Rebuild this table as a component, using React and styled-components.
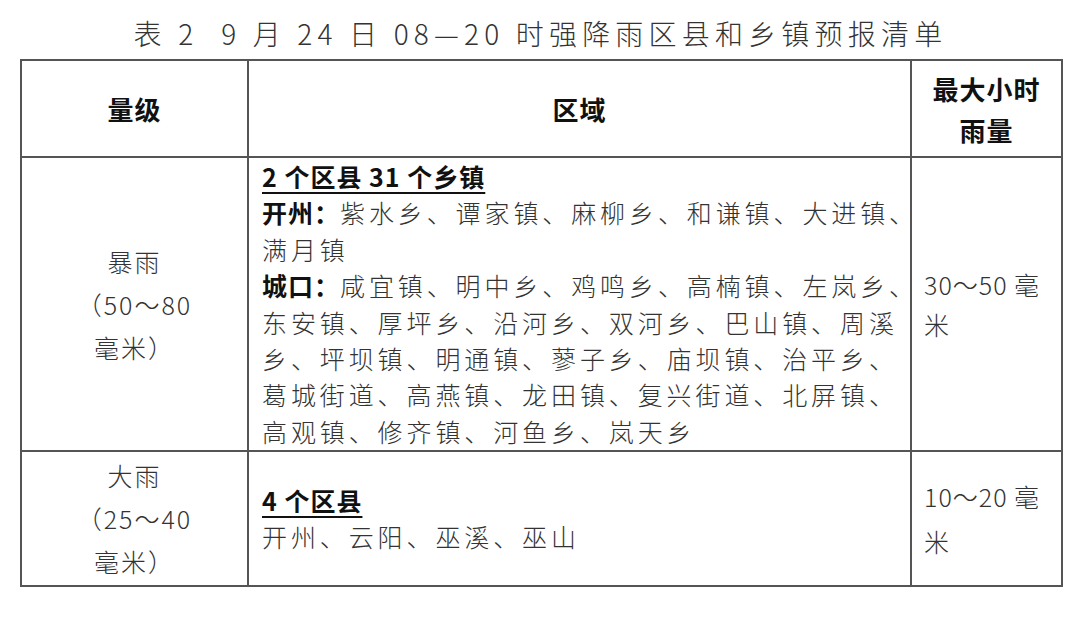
import React from 'react';
import styled, { createGlobalStyle } from 'styled-components';

const GlobalStyle = createGlobalStyle`
  html, body {
    margin: 0;
    padding: 0;
    background: #fff;
  }
  body {
    font-family: "Noto Sans CJK SC", "Noto Sans", sans-serif;
  }
`;

const rows = [
    {
        level: ['暴雨', '（50～80', '毫米）'],
        title: '2 个区县 31 个乡镇',
        lines: [
            { bold: '开州：', text: '紫水乡、谭家镇、麻柳乡、和谦镇、大进镇、' },
            { text: '满月镇' },
            { bold: '城口：', text: '咸宜镇、明中乡、鸡鸣乡、高楠镇、左岚乡、' },
            { text: '东安镇、厚坪乡、沿河乡、双河乡、巴山镇、周溪' },
            { text: '乡、坪坝镇、明通镇、蓼子乡、庙坝镇、治平乡、' },
            { text: '葛城街道、高燕镇、龙田镇、复兴街道、北屏镇、' },
            { text: '高观镇、修齐镇、河鱼乡、岚天乡' },
        ],
        rain: ['30～50 毫', '米'],
        rainGap: 40,
    },
    {
        level: ['大雨', '（25～40', '毫米）'],
        title: '4 个区县',
        lines: [{ text: '开州、云阳、巫溪、巫山' }],
        rain: ['10～20 毫', '米'],
        rainGap: 45,
    },
];

const App = () => {
    return (
        <>
            <GlobalStyle />
            <Page>
                <Title>{'表 2  9 月 24 日 08—20 时强降雨区县和乡镇预报清单'}</Title>
                <Table>
                    <colgroup>
                        <col style={{ width: 227 }} />
                        <col style={{ width: 663 }} />
                        <col style={{ width: 151 }} />
                    </colgroup>
                    <thead>
                        <tr>
                            <HeadCell>量级</HeadCell>
                            <HeadCell>区域</HeadCell>
                            <HeadCell>
                                <HeadLine>最大小时</HeadLine>
                                <HeadLine>雨量</HeadLine>
                            </HeadCell>
                        </tr>
                    </thead>
                    <tbody>
                        {rows.map((row) => (
                            <tr key={row.title}>
                                <LevelCell>
                                    {row.level.map((l) => <Line key={l}>{l}</Line>)}
                                </LevelCell>
                                <AreaCell>
                                    <AreaTitle>{row.title}</AreaTitle>
                                    {row.lines.map((l, i) => (
                                        <AreaLine key={i}>
                                            {l.bold && <Place>{l.bold}</Place>}
                                            {l.text}
                                        </AreaLine>
                                    ))}
                                </AreaCell>
                                <RainCell $gap={row.rainGap}>
                                    {row.rain.map((l) => <Line key={l}>{l}</Line>)}
                                </RainCell>
                            </tr>
                        ))}
                    </tbody>
                </Table>
            </Page>
        </>
    );
};

export default App;

const Page = styled.div`
    width: 1080px;
    padding: 0 19px 0 20px;
    box-sizing: border-box;
`;

const Title = styled.div`
    padding-top: 13px;
    height: 46px;
    line-height: 40px;
    text-align: center;
    font-size: 28px;
    font-weight: 300;
    letter-spacing: 5.2px;
    color: #333;
    white-space: pre;
`;

const Table = styled.table`
    width: 1041px;
    table-layout: fixed;
    border-collapse: collapse;
    color: #333;

    td, th {
        border: 2px solid #555;
        box-sizing: border-box;
    }
`;

const HeadCell = styled.th`
    height: 97px;
    padding: 0;
    font-size: 26px;
    font-weight: 700;
    color: #111;
    letter-spacing: 1px;
    vertical-align: middle;
    text-align: center;
`;

const HeadLine = styled.div`
    line-height: 41px;
`;

const Line = styled.div`
    white-space: nowrap;
`;

const LevelCell = styled.td`
    padding: 2px 0 2px;
    text-align: center;
    vertical-align: middle;
    font-size: 25px;
    font-weight: 300;
    line-height: 43px;
    letter-spacing: 2px;
`;

const AreaCell = styled.td`
    padding: 0 0 1px 13px;
    vertical-align: middle;
    font-size: 25px;
    font-weight: 300;
    line-height: 36.4px;
    letter-spacing: 3.9px;
`;

const AreaTitle = styled.div`
    font-weight: 700;
    color: #111;
    letter-spacing: 1px;
    text-decoration: underline;
    text-decoration-thickness: 2px;
    text-underline-offset: 5px;
    white-space: nowrap;
    width: max-content;
`;

const AreaLine = styled.div`
    white-space: nowrap;
`;

const Place = styled.span`
    font-weight: 700;
    color: #111;
    letter-spacing: 1px;
`;

const RainCell = styled.td`
    padding: 0 0 0 12px;
    vertical-align: middle;
    text-align: left;
    font-size: 25px;
    font-weight: 300;
    letter-spacing: 1px;
    line-height: ${(p) => p.$gap}px;
`;
